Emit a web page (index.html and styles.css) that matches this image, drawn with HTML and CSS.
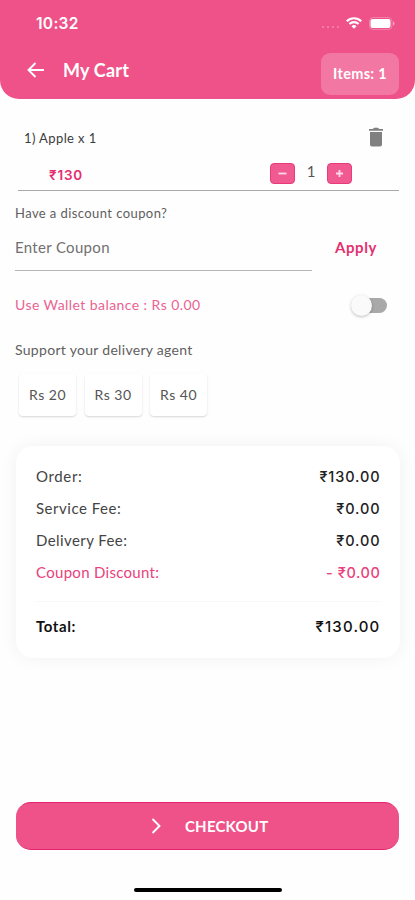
FILE: index.html
```html
<!DOCTYPE html>
<html lang="en">
<head>
<meta charset="utf-8">
<meta name="viewport" content="width=device-width, initial-scale=1">
<title>My Cart</title>
<link rel="stylesheet" href="styles.css">
</head>
<body>
<header class="header">
  <div class="status">
    <span class="time">10:32</span>
    <div class="status-icons">
      <span class="signal"><i></i><i></i><i></i><i></i></span>
      <svg class="wifi" width="16" height="12" viewBox="0 0 16 12"><g fill="none" stroke="#fff" stroke-width="2.1"><path d="M.8 4.2a10.3 10.3 0 0 1 14.4 0"/><path d="M3.4 7a6.5 6.5 0 0 1 9.2 0"/></g><path fill="#fff" d="M8 11.8 5.5 9.2a3.6 3.6 0 0 1 5 0z"/></svg>
      <svg class="battery" width="26" height="13" viewBox="0 0 26 13"><rect x=".5" y=".5" width="22.500" height="12" rx="3.500" fill="none" stroke="#fff" stroke-opacity=".25"/><rect x="1.500" y="2" width="20" height="9" rx="2" fill="#fff"/><path fill="#fff" fill-opacity=".5" d="M24 4.500c2 .6 2 3.400 0 4z"/></svg>
    </div>
  </div>
  <div class="titlebar">
    <svg class="back" width="18" height="16" viewBox="0 0 18 16"><path d="M17 8H1.500M8.500 1l-7 7 7 7" fill="none" stroke="#fff" stroke-width="1.900"/></svg>
    <h1 class="title">My Cart</h1>
    <span class="count">Items: 1</span>
  </div>
</header>

<main>
  <section class="item">
    <div class="item-top">
      <span class="item-name">1) Apple x 1</span>
      <svg class="trash" width="16" height="20" viewBox="0 0 16 20"><path fill="#808080" d="M1 2h3.800L6 .8h4L11.200 2H15v1.700H1zM2 5h12v12.500c0 1.200-.8 2-2 2H4c-1.200 0-2-.8-2-2z"/></svg>
    </div>
    <div class="item-bottom">
      <span class="item-price">₹130</span>
      <div class="stepper">
        <button class="step"><svg width="9" height="9" viewBox="0 0 9 9"><path d="M.5 4.500h8" stroke="#ffd9e7" stroke-width="1.800"/></svg></button>
        <span class="qty">1</span>
        <button class="step"><svg width="9" height="9" viewBox="0 0 9 9"><path d="M1 4.500h7M4.500 1v7" stroke="#ffd9e7" stroke-width="1.800"/></svg></button>
      </div>
    </div>
  </section>

  <section class="coupon">
    <p class="coupon-label">Have a discount coupon?</p>
    <div class="coupon-row">
      <div class="coupon-input"><span>Enter Coupon</span></div>
      <span class="apply">Apply</span>
    </div>
  </section>

  <section class="wallet">
    <span class="wallet-text">Use Wallet balance : Rs 0.00</span>
    <span class="switch"><span class="thumb"></span></span>
  </section>

  <section class="tips">
    <p class="tips-label">Support your delivery agent</p>
    <div class="chips">
      <span class="chip">Rs 20</span>
      <span class="chip">Rs 30</span>
      <span class="chip">Rs 40</span>
    </div>
  </section>

  <section class="summary">
    <div class="line"><span class="l-order">Order:</span><span class="amount">₹130.00</span></div>
    <div class="line"><span class="l-service">Service Fee:</span><span class="amount">₹0.00</span></div>
    <div class="line"><span class="l-delivery">Delivery Fee:</span><span class="amount">₹0.00</span></div>
    <div class="line discount"><span class="l-discount">Coupon Discount:</span><span class="amount">- ₹0.00</span></div>
    <div class="line total"><span class="l-total">Total:</span><span class="amount">₹130.00</span></div>
  </section>
</main>

<footer class="footer">
  <button class="checkout"><svg width="10" height="16" viewBox="0 0 10 16"><path d="M1.500 1l7 7-7 7" fill="none" stroke="#fff" stroke-width="1.900"/></svg><span>CHECKOUT</span></button>
  <div class="home-bar"></div>
</footer>
</body>
</html>
```
FILE: styles.css
```css
* { box-sizing: border-box; }
body {
  margin: 0;
  width: 415px;
  height: 900px;
  display: flex;
  flex-direction: column;
  overflow: hidden;
  background: #fefefe;
  color: #555;
  font: 400 15px/20px Lato, "Noto Sans", sans-serif;
}
h1, p { margin: 0; }
button { border: 0; padding: 0; font: inherit; }
svg { display: block; flex: none; }
span { white-space: nowrap; }

.header {
  height: 99px;
  background: #ee5288;
  border-radius: 0 0 19px 19px;
  color: #fff;
}
.status {
  height: 46px;
  display: flex;
  align-items: center;
  justify-content: space-between;
  padding: 0 20px 0 36px;
}
.time { font: 600 15.5px/20px Inter, sans-serif; letter-spacing: .3px; padding-top: 1px; }
.status-icons { display: flex; align-items: center; }
.signal { display: flex; gap: 2.500px; margin: 8px 7px 0 0; }
.signal i { width: 2.500px; height: 2.500px; border-radius: 50%; background: rgba(255,255,255,.32); }
.wifi { margin-right: 7px; }
.titlebar {
  display: flex;
  align-items: center;
  padding: 7px 16px 0 27px;
}
.back { margin-top: -8px; }
.title {
  flex: 1;
  margin: -8px 0 0 18px;
  font-size: 18px;
  font-weight: 700;
  line-height: 24px;
  letter-spacing: .2px;
}
.count {
  width: 78px;
  height: 42px;
  border-radius: 9px;
  background: #f277a3;
  text-align: center;
  font-weight: 700;
  font-size: 14.500px;
  letter-spacing: .3px;
  line-height: 42px;
}

.item {
  height: 92px;
  margin: 0 16px 0 18px;
  border-bottom: 1px solid #a9a9a9;
}
.item-top {
  height: 57px;
  padding: 19px 15px 0 6px;
  display: flex;
  align-items: center;
  justify-content: space-between;
}
.item-name { font-size: 13px; color: #3c3c3c; letter-spacing: .4px; padding-top: 1px; }
.item-bottom {
  display: flex;
  align-items: center;
  justify-content: space-between;
  padding: 6px 47px 0 31px;
}
.item-price { font: 600 13.500px/20px Inter, sans-serif; color: #e42d70; padding-top: 3px; letter-spacing: .8px; }
.stepper { display: flex; align-items: center; }
.step {
  width: 25px;
  height: 21px;
  border: 1px solid #e83c79;
  border-radius: 4px;
  background: #f05a90;
  display: flex;
  align-items: center;
  justify-content: center;
}
.qty { width: 32px; text-align: center; font-size: 15px; margin-top: -6px; }

.coupon { padding: 12px 15px 0; }
.coupon-label { font-size: 13px; letter-spacing: .42px; color: #606060; }
.coupon-row { display: flex; }
.coupon-input {
  width: 297px;
  height: 48px;
  padding-top: 14px;
  border-bottom: 1px solid #b5b5b5;
  color: #707070;
  letter-spacing: .32px;
}
.apply { margin: 14px 0 0 23px; font-weight: 700; color: #e3316f; letter-spacing: .6px; }

.wallet {
  height: 68px;
  padding: 0 28px 0 15px;
  display: flex;
  align-items: center;
  justify-content: space-between;
  color: #ea6392;
}
.wallet-text { font-size: 14px; letter-spacing: .43px; }
.switch {
  width: 36px;
  height: 15px;
  border-radius: 8px;
  background: linear-gradient(90deg, transparent 9px, #a9a9a9 9px);
  display: flex;
  align-items: center;
}
.thumb {
  width: 21px;
  height: 21px;
  border-radius: 50%;
  background: #fafafa;
  box-shadow: 0 1px 3px rgba(0,0,0,.25);
}

.tips { padding: 1px 15px 0; }
.tips-label { font-size: 14px; color: #606060; letter-spacing: .3px; }
.chips { display: flex; gap: 8.500px; padding: 14px 4px 0; }
.chip {
  width: 57px;
  height: 42px;
  border-radius: 4px;
  background: #fff;
  box-shadow: 0 1px 2px rgba(0,0,0,.16);
  text-align: center;
  line-height: 41px;
  font-size: 14px;
  letter-spacing: .5px;
}

.summary {
  height: 212px;
  margin: 30px 15px 0 16px;
  padding: 14px 20px 0;
  border-radius: 17px;
  background: #fff;
  box-shadow: 0 0 18px rgba(0,0,0,.055);
  color: #444;
}
.line {
  height: 32px;
  display: flex;
  align-items: center;
  justify-content: space-between;
}
.l-order { letter-spacing: .65px; }
.l-service { letter-spacing: .52px; }
.l-delivery { letter-spacing: .42px; }
.l-discount { letter-spacing: .3px; }
.amount {
  margin-right: -.5px;
  padding-top: 1px;
  color: #222;
  font: 500 14.500px/20px Inter, sans-serif;
  letter-spacing: .9px;
}
.discount, .discount .amount { color: #e9427c; }
.discount .amount { letter-spacing: .6px; }
.total {
  height: 49px;
  margin-top: 13px;
  border-top: 1px solid #f8f8f8;
  color: #111;
}
.l-total { font-weight: 700; letter-spacing: .6px; }
.total .amount { color: #111; font-size: 15px; letter-spacing: 1.200px; }

.footer { margin-top: auto; padding: 0 16px 8px; }
.checkout {
  width: 383px;
  height: 48px;
  border: solid #e4226f;
  border-width: 1px 0;
  border-radius: 15px;
  background: #ee5288;
  color: #fff;
  display: flex;
  align-items: center;
  padding-left: 135px;
  gap: 24px;
  font-size: 15px;
  font-weight: 700;
  letter-spacing: .2px;
}
.home-bar {
  width: 148px;
  height: 4px;
  margin: 38px auto 0 118px;
  border-radius: 2px;
  background: #000;
}
```
